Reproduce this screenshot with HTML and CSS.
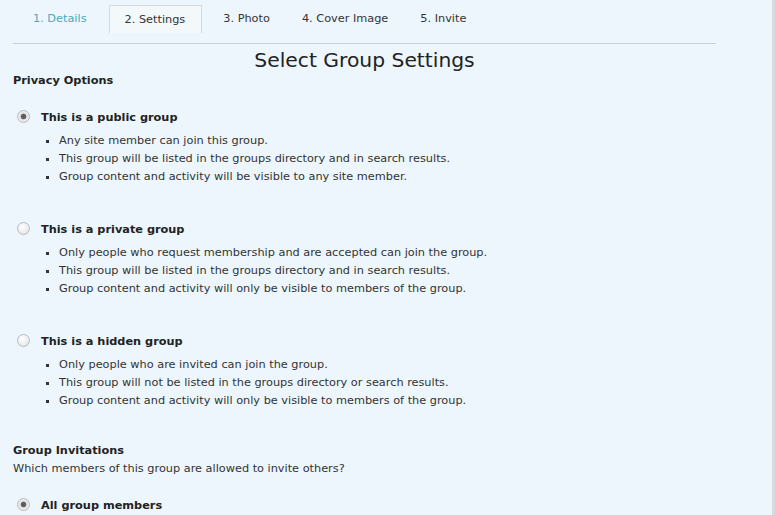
FILE: index.html
```html
<!DOCTYPE html>
<html>
<head>
<meta charset="utf-8">
<link rel="stylesheet" href="styles.css">
</head>
<body>
<div class="page">
  <div class="main">
    <nav class="tabs">
      <span class="tab done">1. Details</span>
      <span class="tab current">2. Settings</span>
      <span class="tab">3. Photo</span>
      <span class="tab">4. Cover Image</span>
      <span class="tab">5. Invite</span>
    </nav>
    <h2 class="title">Select Group Settings</h2>
    <h4 class="section">Privacy Options</h4>

    <div class="option">
      <label class="choice"><span class="radio checked"></span><strong>This is a public group</strong></label>
      <ul class="points">
        <li>Any site member can join this group.</li>
        <li>This group will be listed in the groups directory and in search results.</li>
        <li>Group content and activity will be visible to any site member.</li>
      </ul>
    </div>

    <div class="option">
      <label class="choice"><span class="radio"></span><strong>This is a private group</strong></label>
      <ul class="points">
        <li>Only people who request membership and are accepted can join the group.</li>
        <li>This group will be listed in the groups directory and in search results.</li>
        <li>Group content and activity will only be visible to members of the group.</li>
      </ul>
    </div>

    <div class="option">
      <label class="choice"><span class="radio"></span><strong>This is a hidden group</strong></label>
      <ul class="points">
        <li>Only people who are invited can join the group.</li>
        <li>This group will not be listed in the groups directory or search results.</li>
        <li>Group content and activity will only be visible to members of the group.</li>
      </ul>
    </div>

    <div class="invites">
      <h4 class="section">Group Invitations</h4>
      <p class="question">Which members of this group are allowed to invite others?</p>
      <label class="choice last"><span class="radio checked"></span><strong>All group members</strong></label>
    </div>
  </div>
</div>
</body>
</html>
```

FILE: styles.css
```css
html, body {
  margin: 0;
  padding: 0;
  height: 100%;
  overflow: hidden;
}
body {
  background: #edf6fc;
  font-family: "DejaVu Sans", Verdana, sans-serif;
  font-size: 11.3px;
  color: #333;
}
.page {
  height: 515px;
  border-right: 3px solid #d5dce1;
  box-sizing: border-box;
}
.main {
  width: 703px;
  margin-left: 13px;
}
.tabs {
  display: flex;
  align-items: flex-start;
  padding: 5px 0 10px 4px;
  border-bottom: 1px solid #c9d0d6;
}
.tab {
  display: block;
  padding: 6px 15px 0 15px;
  height: 28px;
  box-sizing: border-box;
  color: #333;
  border: 1px solid transparent;
  border-bottom: none;
}
.tab.done { color: #4aa8c0; }
.tab.current {
  border-color: #d6dadd;
  background: #f3f8fb;
  padding-top: 7px;
  padding-left: 15px;
  padding-right: 16px;
  margin: 0 5px 0 6px;
}
.title {
  margin: 4px 0 0 0;
  font-weight: normal;
  font-size: 20.3px;
  line-height: 24px;
  text-align: center;
  color: #222;
}
.section {
  margin: 0;
  font-size: 11.3px;
  line-height: 18px;
  font-weight: bold;
  color: #222;
}
.option {
  margin-top: 18px;
  margin-bottom: 34px;
}
.choice {
  display: flex;
  align-items: center;
  height: 18px;
  padding-left: 4px;
  color: #222;
}
.choice strong { margin-left: 11px; }
.radio {
  width: 11px;
  height: 11px;
  border-radius: 50%;
  border: 1px solid #b9bcbe;
  background: radial-gradient(circle at 40% 35%, #ffffff 0%, #eeeeee 55%, #d8d8d8 100%);
  box-sizing: content-box;
  flex: none;
  position: relative;
  top: -1px;
}
.radio.checked {
  background: radial-gradient(circle, #555 0, #666 2.5px, #e3e3e3 3.2px, #f4f4f4 100%);
}
.points {
  list-style: square;
  margin: 6px 0 0 0;
  padding-left: 46px;
  line-height: 18px;
}
.invites { margin-top: -2px; }
.question {
  margin: 0;
  line-height: 18px;
}
.choice.last { margin-top: 18px; }
```
